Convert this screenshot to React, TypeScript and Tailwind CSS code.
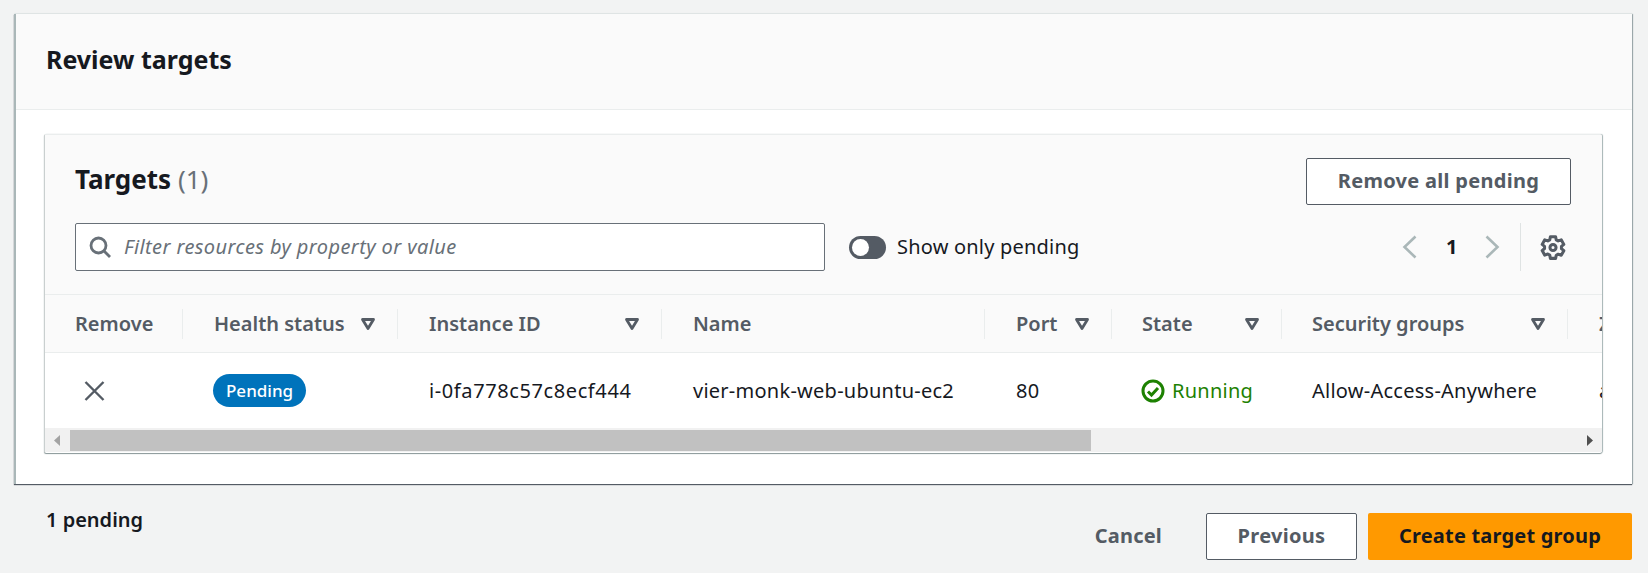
const font = { fontFamily: '"Noto Sans", "Liberation Sans", sans-serif' };

function Caret() {
  return (
    <svg width="16" height="14" viewBox="0 0 16 14" className="shrink-0">
      <path d="M2.500 2.500h11L8 11.500z" fill="none" stroke="#545b64" strokeWidth="2.800" strokeLinejoin="round" />
    </svg>
  );
}

function HeadCell({ width, label, caret, pl = "pl-[31px]" }: { width: string; label: string; caret?: boolean; pl?: string }) {
  return (
    <div className={`${width} ${pl} shrink-0 h-[30px] flex items-center justify-between pr-[21px] border-r border-[#eaeded]`}>
      <span className="text-[20px] font-semibold text-[#545b64] whitespace-nowrap">{label}</span>
      {caret && <Caret />}
    </div>
  );
}

function BodyCell({ width, children, pl = "pl-[31px]", tracking = "tracking-[0.25px]" }: { width: string; children: React.ReactNode; pl?: string; tracking?: string }) {
  return <div className={`${width} ${pl} ${tracking} shrink-0 text-[20px] text-[#16191f] whitespace-nowrap`}>{children}</div>;
}

export default function App() {
  return (
    <div className="h-[573px] w-[1648px] overflow-hidden bg-[#f2f3f3] pt-[14px] pl-[14px] pr-[16px]" style={font}>
      <section className="bg-white border-l-2 border-[#aab7b8] shadow-[0_1px_1px_#545b64,1px_0_1px_#aab7b8,0_-1px_1px_#eaeded] h-[470px] flex flex-col">
        <div className="h-[96px] shrink-0 bg-[#fafafa] border-b border-[#eaeded] flex items-center pl-[30px] pb-[4px]">
          <h2 className="text-[25px] font-bold text-[#16191f]">Review targets</h2>
        </div>
        <div className="pl-[28px] pr-[30px] pt-[24px]">
          <div className="h-[319px] bg-white border-l border-t border-l-[#c9cfcf] border-t-[#eaeded] shadow-[0_1px_1px_#879596,1px_0_1px_#aab7b8] rounded-[2px] flex flex-col overflow-hidden">
            <div className="h-[160px] shrink-0 bg-[#fafafa] border-b border-[#eaeded] pl-[30px] pr-[31px] pt-[23px]">
              <div className="flex items-center justify-between h-[46px]">
                <h3 className="text-[26px] font-bold text-[#16191f] pb-[4px]">
                  Targets <span className="font-normal text-[#687078]">(1)</span>
                </h3>
                <button className="w-[265px] h-[47px] bg-white border border-[#545b64] rounded-[2px] text-[20px] font-bold tracking-[0.3px] text-[#545b64]">
                  Remove all pending
                </button>
              </div>
              <div className="flex items-center mt-[19px]">
                <div className="w-[750px] h-[48px] bg-white border border-[#687078] rounded-[2px] flex items-center pl-[13px]">
                  <svg width="22" height="22" viewBox="0 0 22 22" fill="none" stroke="#687078" strokeWidth="2.800">
                    <circle cx="9.500" cy="9.500" r="7.500" />
                    <path d="M15 15l6 6" />
                  </svg>
                  <span className="ml-[13px] text-[20px] italic tracking-[0.4px] text-[#687078]">Filter resources by property or value</span>
                </div>
                <div className="ml-[24px] w-[37px] h-[23px] rounded-full bg-[#545b64] relative">
                  <span className="absolute left-[3px] top-[3px] w-[17px] h-[17px] rounded-full bg-white" />
                </div>
                <span className="ml-[11px] text-[20px] tracking-[0.2px] text-[#16191f]">Show only pending</span>
                <div className="ml-auto flex items-center mr-[5px]">
                  <svg width="15" height="24" viewBox="0 0 15 24" fill="none" stroke="#aab7b8" strokeWidth="2.600">
                    <path d="M13.500 1.500L2.500 12l11 10.500" />
                  </svg>
                  <span className="ml-[29px] w-[10px] text-[20px] font-bold text-[#16191f]">1</span>
                  <svg className="ml-[29px]" width="15" height="24" viewBox="0 0 15 24" fill="none" stroke="#aab7b8" strokeWidth="2.600">
                    <path d="M1.500 1.500L12.500 12 1.500 22.500" />
                  </svg>
                  <div className="ml-[20px] h-[48px] border-l border-[#dfe3e3] pl-[19px] flex items-center">
                    <svg width="26" height="26" viewBox="0 0 24 24" fill="none" stroke="#545b64" strokeWidth="2.800" strokeLinejoin="round">
                      <path d="M9.600 2.500h4.800l.6 2.900 1.800 1 2.800-1 2.400 4.200-2.200 1.900v2l2.200 1.900-2.400 4.200-2.800-1-1.800 1-.6 2.900H9.600L9 19.500l-1.800-1-2.800 1L2 15.300l2.200-1.900v-2L2 9.600l2.400-4.200 2.800 1 1.800-1z" />
                      <circle cx="12" cy="12.400" r="2.800" />
                    </svg>
                  </div>
                </div>
              </div>
            </div>
            <div className="h-[58px] shrink-0 bg-[#fafafa] border-b border-[#eaeded] flex items-center overflow-hidden">
              <HeadCell width="w-[138px]" pl="pl-[30px]" label="Remove" />
              <HeadCell width="w-[215px]" label="Health status" caret />
              <HeadCell width="w-[264px]" label="Instance ID" caret />
              <HeadCell width="w-[323px]" label="Name" />
              <HeadCell width="w-[127px]" label="Port" caret />
              <HeadCell width="w-[170px]" pl="pl-[30px]" label="State" caret />
              <HeadCell width="w-[286px]" pl="pl-[30px]" label="Security groups" caret />
              <div className="pl-[31px] text-[20px] font-semibold text-[#545b64]">Zone</div>
            </div>
            <div className="h-[75px] shrink-0 bg-white flex items-center overflow-hidden">
              <BodyCell width="w-[138px]" pl="pl-[30px]">
                <svg className="ml-[9px]" width="21" height="20" viewBox="0 0 21 20" fill="none" stroke="#545b64" strokeWidth="2.400">
                  <path d="M1.500 1l18 18M19.500 1l-18 18" />
                </svg>
              </BodyCell>
              <div className="w-[215px] shrink-0 pl-[30px]">
                <span className="inline-flex items-center h-[33px] px-[13px] rounded-full bg-[#0073bb] text-white text-[17px] font-medium">Pending</span>
              </div>
              <BodyCell width="w-[264px]" tracking="tracking-[0.6px]">i-0fa778c57c8ecf444</BodyCell>
              <BodyCell width="w-[323px]">vier-monk-web-ubuntu-ec2</BodyCell>
              <BodyCell width="w-[127px]">80</BodyCell>
              <BodyCell width="w-[170px]" pl="pl-[30px]">
                <span className="flex items-center gap-[7px] text-[#1d8102]">
                  <svg className="-ml-[1px]" width="24" height="24" viewBox="0 0 24 24" fill="none" stroke="#1d8102" strokeWidth="3">
                    <circle cx="12" cy="12" r="10" />
                    <path d="M7 12.500l3.500 3.500L17 9" />
                  </svg>
                  Running
                </span>
              </BodyCell>
              <BodyCell width="w-[286px]" pl="pl-[30px]">Allow-Access-Anywhere</BodyCell>
              <BodyCell width="w-[100px]">ap-south-1a</BodyCell>
            </div>
            <div className="h-[24px] shrink-0 bg-[#f1f1f1] flex items-center">
              <div className="w-[25px] shrink-0 flex justify-center">
                <svg width="7" height="11" viewBox="0 0 7 11"><path d="M6 0v11L0 5.500z" fill="#a3a3a3" /></svg>
              </div>
              <div className="w-[1021px] h-[21px] mt-[1px] bg-[#c1c1c1]" />
              <div className="flex-1 flex justify-end pr-[9px]">
                <svg width="7" height="11" viewBox="0 0 7 11"><path d="M1 0v11l6-5.500z" fill="#505050" /></svg>
              </div>
            </div>
          </div>
        </div>
      </section>
      <footer className="flex items-start h-[47px] mt-[29px]">
        <span className="ml-[32px] -mt-[8px] text-[20px] font-semibold text-[#16191f]">1 pending</span>
        <button className="ml-auto h-[47px] pb-[2px] text-[20px] font-bold tracking-[0.2px] text-[#545b64]">Cancel</button>
        <button className="ml-[44px] w-[151px] h-[47px] pb-[2px] bg-white border border-[#545b64] rounded-[2px] text-[20px] font-bold tracking-[0.3px] text-[#545b64]">Previous</button>
        <button className="ml-[11px] w-[264px] h-[47px] pb-[2px] bg-[#ff9900] rounded-[2px] text-[20px] font-bold tracking-[0.2px] text-[#16191f]">Create target group</button>
      </footer>
    </div>
  );
}
